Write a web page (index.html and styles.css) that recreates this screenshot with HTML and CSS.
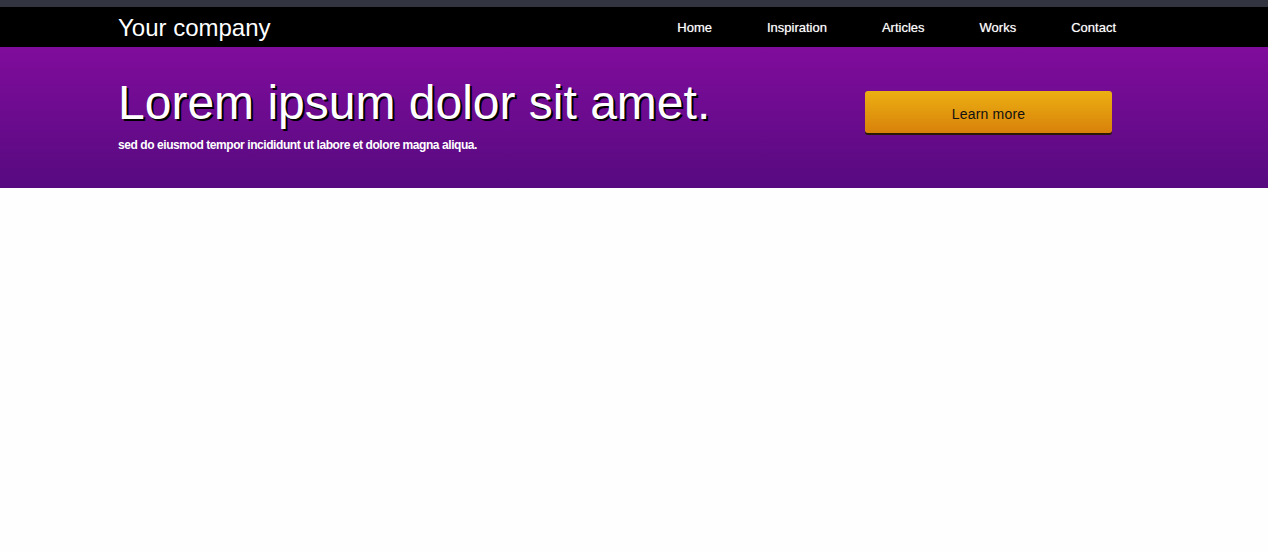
FILE: index.html
```html
<!DOCTYPE html>
<html>
<head>
<meta charset="utf-8">
<title>Your company</title>
<link rel="stylesheet" href="styles.css">
</head>
<body>
<div class="topbar"></div>
<header class="nav">
  <div class="container nav-inner">
    <div class="logo">Your company</div>
    <ul class="menu">
      <li><a href="#">Home</a></li>
      <li><a href="#">Inspiration</a></li>
      <li><a href="#">Articles</a></li>
      <li><a href="#">Works</a></li>
      <li><a href="#">Contact</a></li>
    </ul>
  </div>
</header>
<section class="hero">
  <div class="container hero-inner">
    <div class="hero-text">
      <h1>Lorem ipsum dolor sit amet.</h1>
      <p>sed do eiusmod tempor incididunt ut labore et dolore magna aliqua.</p>
    </div>
    <a class="btn" href="#">Learn more</a>
  </div>
</section>
</body>
</html>
```
FILE: styles.css
```css
* { box-sizing: border-box; }
html, body { margin: 0; padding: 0; }
body {
  font-family: "Liberation Sans", Arial, sans-serif;
  background: #fefefe;
}
.topbar { height: 7px; background: #32343f; }
.nav { background: #000; height: 40px; }
.container { width: 1032px; margin: 0 auto; }
.nav-inner {
  display: flex;
  align-items: center;
  justify-content: space-between;
  height: 40px;
  padding-right: 34px;
}
.logo { color: #fff; font-size: 24px; line-height: 40px; padding-top: 1px; }
.menu {
  list-style: none; margin: 0; padding: 0;
  display: flex; gap: 55px;
}
.menu a {
  color: #fff; text-decoration: none; font-size: 13px;
  text-shadow: 0 0 1px rgba(255,255,255,0.6);
}
.hero {
  height: 141px;
  background: linear-gradient(#800c9c, #570a80);
}
.hero-inner {
  display: flex;
  justify-content: space-between;
  align-items: flex-start;
  padding-right: 38px;
}
.hero-text h1 {
  margin: 0; padding-top: 27px;
  color: #fff; font-weight: normal; font-size: 48px; line-height: 58px;
  text-shadow: 2px 2px 0 #000;
}
.hero-text p {
  margin: 5px 0 0;
  color: #fff;
  font-size: 12px; font-weight: bold; line-height: 16px;
  letter-spacing: -0.43px;
}
.btn {
  margin-top: 44px;
  width: 247px; height: 42px;
  display: flex; align-items: center; justify-content: center;
  padding-top: 3px;
  background: linear-gradient(#ecb012, #d8810a);
  border-radius: 3px;
  box-shadow: 0 2px 0 #2a1a05;
  color: #111; font-size: 14px; text-decoration: none;
  letter-spacing: 0.2px;
}
```
